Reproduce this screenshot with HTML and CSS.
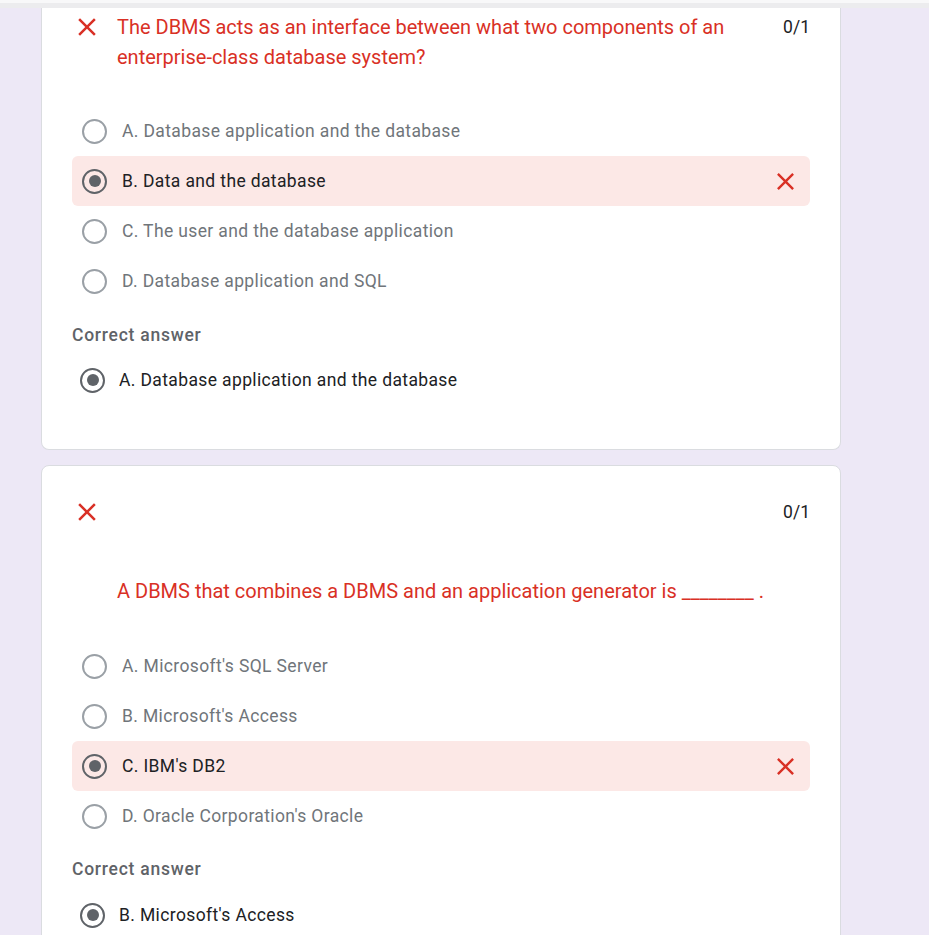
FILE: index.html
```html
<!DOCTYPE html>
<html lang="en">
<head>
<meta charset="utf-8">
<title>Quiz results</title>
<link rel="stylesheet" href="styles.css">
</head>
<body>
<div class="topbar"></div>
<main class="page">
  <section class="card card-cut">
    <div class="q-head">
      <svg class="x-icon" viewBox="0 0 24 24"><path d="M19 6.41L17.59 5 12 10.59 6.41 5 5 6.41 10.59 12 5 17.59 6.41 19 12 13.41 17.59 19 19 17.59 13.41 12z"/></svg>
      <div class="q-title">The DBMS acts as an interface between what two components of an enterprise-class database system?</div>
      <div class="score">0/1</div>
    </div>
    <ul class="options">
      <li class="opt"><span class="radio"></span><span class="opt-text">A. Database application and the database</span></li>
      <li class="opt opt-wrong"><span class="radio radio-on"></span><span class="opt-text">B. Data and the database</span>
        <svg class="x-icon x-small" viewBox="0 0 24 24"><path d="M19 6.41L17.59 5 12 10.59 6.41 5 5 6.41 10.59 12 5 17.59 6.41 19 12 13.41 17.59 19 19 17.59 13.41 12z"/></svg></li>
      <li class="opt"><span class="radio"></span><span class="opt-text">C. The user and the database application</span></li>
      <li class="opt"><span class="radio"></span><span class="opt-text">D. Database application and SQL</span></li>
    </ul>
    <div class="correct-label">Correct answer</div>
    <div class="correct"><span class="radio radio-on"></span><span class="opt-text">A. Database application and the database</span></div>
  </section>

  <section class="card card-two">
    <div class="q-head">
      <svg class="x-icon" viewBox="0 0 24 24"><path d="M19 6.41L17.59 5 12 10.59 6.41 5 5 6.41 10.59 12 5 17.59 6.41 19 12 13.41 17.59 19 19 17.59 13.41 12z"/></svg>
      <div class="q-spacer"></div>
      <div class="score">0/1</div>
    </div>
    <div class="q-title q-title-solo">A DBMS that combines a DBMS and an application generator is ________ .</div>
    <ul class="options">
      <li class="opt"><span class="radio"></span><span class="opt-text">A. Microsoft's SQL Server</span></li>
      <li class="opt"><span class="radio"></span><span class="opt-text">B. Microsoft's Access</span></li>
      <li class="opt opt-wrong"><span class="radio radio-on"></span><span class="opt-text">C. IBM's DB2</span>
        <svg class="x-icon x-small" viewBox="0 0 24 24"><path d="M19 6.41L17.59 5 12 10.59 6.41 5 5 6.41 10.59 12 5 17.59 6.41 19 12 13.41 17.59 19 19 17.59 13.41 12z"/></svg></li>
      <li class="opt"><span class="radio"></span><span class="opt-text">D. Oracle Corporation's Oracle</span></li>
    </ul>
    <div class="correct-label">Correct answer</div>
    <div class="correct"><span class="radio radio-on"></span><span class="opt-text">B. Microsoft's Access</span></div>
  </section>
</main>
</body>
</html>
```

FILE: styles.css
```css
* { box-sizing: border-box; }

html, body {
  margin: 0;
  padding: 0;
  height: 100%;
  overflow: hidden;
}

body {
  background: #ede8f6;
  font-family: Roboto, "Liberation Sans", Arial, sans-serif;
  color: #202124;
}

.topbar {
  height: 8px;
  background: linear-gradient(#f8f8f9 0, #f8f8f9 3px, #ececee 3px, #ececee 8px);
}

.page {
  padding-left: 41px;
  width: 841px;
  display: flex;
  flex-direction: column;
  gap: 15px;
}

.card {
  background: #fff;
  border: 1px solid #dadce0;
  border-radius: 8px;
  padding: 31px 30px 44px 30px;
}

.card-cut {
  border-top: 0;
  border-top-left-radius: 0;
  border-top-right-radius: 0;
  padding-top: 4px;
}

.q-head {
  display: flex;
  align-items: flex-start;
}

.x-icon {
  width: 30px;
  height: 30px;
  flex: none;
  fill: #d93025;
}

.q-title {
  flex: 1;
  margin-left: 15px;
  margin-right: 40px;
  font-size: 20px;
  line-height: 30px;
  color: #d93025;
}

.q-spacer { flex: 1; }

.q-title-solo {
  margin: 49px 0 0 45px;
}

.score {
  flex: none;
  font-size: 17.5px;
  line-height: 30px;
  color: #202124;
}

.options {
  list-style: none;
  margin: 34px 0 0 0;
  padding: 0;
}

.card-two .options { margin-top: 35px; }

.opt {
  display: flex;
  align-items: center;
  height: 50px;
  padding: 0 10px;
  border-radius: 6px;
}

.opt-wrong {
  background: #fce8e6;
}

.opt .opt-text {
  flex: 1;
  margin-left: 15px;
  font-size: 17.5px;
  letter-spacing: 0.37px;
  color: #70757a;
}

.opt.opt-wrong .opt-text { color: #202124; }

.x-small {
  width: 29px;
  height: 29px;
}

.radio {
  flex: none;
  width: 25px;
  height: 25px;
  border-radius: 50%;
  border: 2.5px solid #9aa0a6;
  display: flex;
  align-items: center;
  justify-content: center;
}

.radio-on {
  border-color: #5f6368;
}

.radio-on::after {
  content: "";
  width: 12px;
  height: 12px;
  border-radius: 50%;
  background: #5f6368;
}

.correct-label {
  margin-top: 17px;
  font-size: 17.5px;
  line-height: 24px;
  font-weight: 500;
  color: #5f6368;
  letter-spacing: 0.75px;
}

.card-two .correct-label { margin-top: 16px; }

.correct {
  display: flex;
  align-items: center;
  height: 50px;
  margin-top: 8px;
  padding-left: 8px;
}

.card-two .correct { margin-top: 9px; }

.correct .opt-text {
  margin-left: 14px;
  font-size: 17.5px;
  letter-spacing: 0.37px;
  color: #202124;
}
```
